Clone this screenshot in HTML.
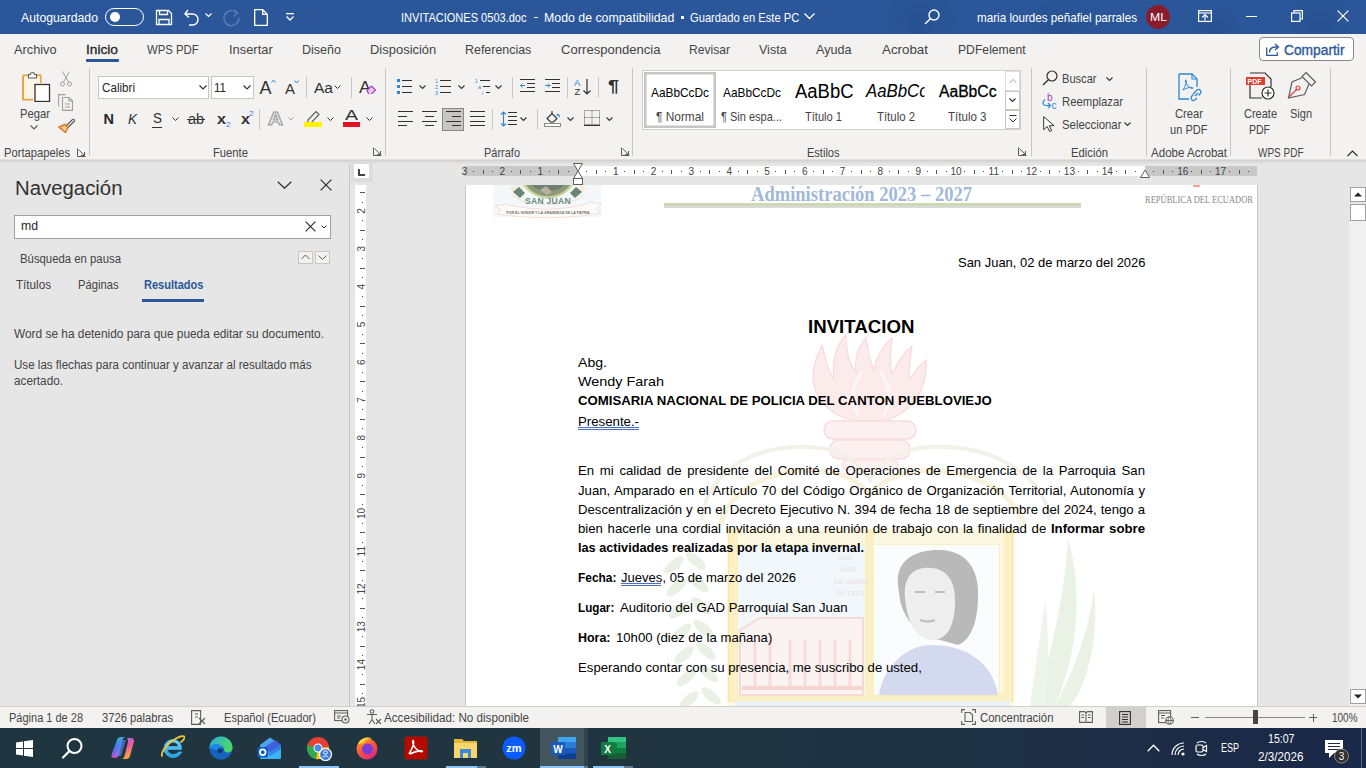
<!DOCTYPE html><html><head><meta charset="utf-8"><style>
html,body{margin:0;padding:0;width:1366px;height:768px;overflow:hidden;position:relative;background:#F3F2F1;font-family:"Liberation Sans",sans-serif;}
div,svg{box-sizing:border-box;}
</style></head><body>
<div style="position:absolute;left:0px;top:0px;width:1366px;height:34px;background:#2B579A"></div>
<svg style="position:absolute;left:0;top:0" width="1366" height="34"><defs><radialGradient id="tb"><stop offset="0" stop-color="#1E4480" stop-opacity="0.35"/><stop offset="0.7" stop-color="#1E4480" stop-opacity="0.15"/><stop offset="1" stop-color="#1E4480" stop-opacity="0"/></radialGradient></defs><circle cx="920" cy="22" r="40" fill="url(#tb)"/><circle cx="1060" cy="30" r="35" fill="url(#tb)"/><circle cx="1215" cy="34" r="30" fill="url(#tb)"/><circle cx="1320" cy="28" r="35" fill="url(#tb)"/></svg>
<div style="position:absolute;left:0px;top:34px;width:1366px;height:126px;background:#F3F2F1"></div>
<div style="position:absolute;left:0px;top:159px;width:1366px;height:1px;background:#E1DFDD"></div>
<div style="position:absolute;left:0px;top:160px;width:349px;height:546px;background:#E6E6E6"></div>
<div style="position:absolute;left:349px;top:160px;width:1px;height:546px;background:#C8C6C4"></div>
<div style="position:absolute;left:350px;top:160px;width:1016px;height:546px;background:#E6E6E6"></div>
<div style="position:absolute;left:0px;top:160px;width:1366px;height:4px;background:linear-gradient(#D2D0CE,#E6E6E6)"></div>
<div style="position:absolute;left:465px;top:185px;width:792px;height:521px;background:#FFFFFF"></div>
<div style="position:absolute;left:465px;top:185px;width:1px;height:521px;background:#C6C6C6"></div>
<div style="position:absolute;left:1257px;top:185px;width:1px;height:521px;background:#C6C6C6"></div>
<div style="position:absolute;left:0px;top:706px;width:1366px;height:1px;background:#D2D0CE"></div>
<div style="position:absolute;left:0px;top:707px;width:1366px;height:21px;background:#F3F2F1"></div>
<div style="position:absolute;left:0px;top:728px;width:1366px;height:40px;background:linear-gradient(90deg,#1F3540 0%,#20353F 45%,#1E3143 70%,#1C2C46 85%,#1A2848 100%)"></div>
<div style="position:absolute;left:21px;top:10.5px;font: 400 13px/13px 'Liberation Sans', sans-serif;color:#FFFFFF;white-space:nowrap;transform:scaleX(0.9426);transform-origin:0 0;">Autoguardado</div>
<div style="position:absolute;left:105px;top:8px;width:39px;height:18px;border:1.5px solid #fff;border-radius:9px"></div>
<div style="position:absolute;left:110px;top:12px;width:10px;height:10px;border-radius:50%;background:#fff"></div>
<svg style="position:absolute;left:155px;top:9px;" width="18" height="17" viewBox="0 0 18 17"><path d="M1.5 1.5h12l3 3v11h-15z" fill="none" stroke="#fff" stroke-width="1.3"/><path d="M4.5 1.5v4h8v-4M4 15.5v-5h10v5" fill="none" stroke="#fff" stroke-width="1.3"/></svg>
<svg style="position:absolute;left:183px;top:8px;" width="20" height="19" viewBox="0 0 20 19"><path d="M5 2L2 6l4 3.5" fill="none" stroke="#fff" stroke-width="1.4"/><path d="M2.5 6h7a5.5 5.5 0 0 1 0 11H6" fill="none" stroke="#fff" stroke-width="1.4"/></svg>
<svg style="position:absolute;left:205px;top:13px;" width="7" height="5" viewBox="0 0 7 5"><path d="M0.5 0.5l3 3 3-3" fill="none" stroke="#fff" stroke-width="1.2"/></svg>
<svg style="position:absolute;left:222px;top:9px;" width="19" height="18" viewBox="0 0 19 18"><path d="M15 4A7.5 7.5 0 1 0 17 9" fill="none" stroke="#5B7FB5" stroke-width="1.4"/><path d="M12 1l3.5 3L12 7" fill="none" stroke="#5B7FB5" stroke-width="1.4"/></svg>
<svg style="position:absolute;left:254px;top:9px;" width="14" height="17" viewBox="0 0 14 17"><path d="M0.7 0.7h8l4.6 4.6v11H0.7z M8.7 0.7v4.6h4.6" fill="none" stroke="#fff" stroke-width="1.3"/></svg>
<svg style="position:absolute;left:286px;top:13px;" width="8" height="8" viewBox="0 0 8 8"><path d="M0 0.7h8" stroke="#fff" stroke-width="1.3"/><path d="M0.5 3.5l3.5 3.5 3.5-3.5" fill="none" stroke="#fff" stroke-width="1.3"/></svg>
<div style="position:absolute;left:401px;top:10.5px;font: 400 13px/13px 'Liberation Sans', sans-serif;color:#FFFFFF;white-space:nowrap;transform:scaleX(0.8487);transform-origin:0 0;">INVITACIONES 0503.doc</div>
<div style="position:absolute;left:534px;top:17px;width:4px;height:1px;background:#fff"></div>
<div style="position:absolute;left:544.3px;top:10.5px;font: 400 13px/13px 'Liberation Sans', sans-serif;color:#FFFFFF;white-space:nowrap;transform:scaleX(0.9489);transform-origin:0 0;">Modo de compatibilidad</div>
<div style="position:absolute;left:681px;top:16px;width:3px;height:3px;background:#fff"></div>
<div style="position:absolute;left:690px;top:10.5px;font: 400 13px/13px 'Liberation Sans', sans-serif;color:#FFFFFF;white-space:nowrap;transform:scaleX(0.8585);transform-origin:0 0;">Guardado en Este PC</div>
<svg style="position:absolute;left:804px;top:13px;" width="11" height="7" viewBox="0 0 11 7"><path d="M0.5 0.5l5 5 5-5" fill="none" stroke="#fff" stroke-width="1.3"/></svg>
<svg style="position:absolute;left:924px;top:9px;" width="16" height="16" viewBox="0 0 16 16"><circle cx="10" cy="6" r="5" fill="none" stroke="#fff" stroke-width="1.4"/><path d="M6.5 9.5L1 15" stroke="#fff" stroke-width="1.5"/></svg>
<div style="position:absolute;left:977px;top:10.5px;font: 400 13px/13px 'Liberation Sans', sans-serif;color:#FFFFFF;white-space:nowrap;transform:scaleX(0.8964);transform-origin:0 0;">maria lourdes peñafiel parrales</div>
<div style="position:absolute;left:1146px;top:5px;width:24px;height:24px;border-radius:50%;background:#8B1C2C"></div>
<div style="position:absolute;left:1149.5px;top:11.5px;font: 400 11px/11px 'Liberation Sans', sans-serif;color:#FFFFFF;white-space:nowrap;transform:scaleX(1.1125);transform-origin:0 0;">ML</div>
<svg style="position:absolute;left:1198px;top:10px;" width="14" height="12" viewBox="0 0 14 12"><rect x="0.6" y="0.6" width="12.8" height="10.8" fill="none" stroke="#fff" stroke-width="1.2"/><path d="M0.6 3h12.8" stroke="#fff" stroke-width="1.2"/><path d="M4 7.5l3-3 3 3M7 4.5v6" fill="none" stroke="#fff" stroke-width="1.2"/></svg>
<div style="position:absolute;left:1246px;top:16px;width:11px;height:1px;background:#fff"></div>
<svg style="position:absolute;left:1291px;top:10px;" width="12" height="12" viewBox="0 0 12 12"><rect x="0.6" y="3" width="8.4" height="8.4" fill="none" stroke="#fff" stroke-width="1.2"/><path d="M3 3V0.6h8.4V9H9" fill="none" stroke="#fff" stroke-width="1.2"/></svg>
<svg style="position:absolute;left:1337px;top:10px;" width="12" height="12" viewBox="0 0 12 12"><path d="M0.6 0.6l10.8 10.8M11.4 0.6L0.6 11.4" stroke="#fff" stroke-width="1.3"/></svg>
<div style="position:absolute;left:14px;top:42.5px;font: 400 13px/13px 'Liberation Sans', sans-serif;color:#444444;white-space:nowrap;transform:scaleX(0.9825);transform-origin:0 0;">Archivo</div>
<div style="position:absolute;left:147px;top:42.5px;font: 400 13px/13px 'Liberation Sans', sans-serif;color:#444444;white-space:nowrap;transform:scaleX(0.8728);transform-origin:0 0;">WPS PDF</div>
<div style="position:absolute;left:229px;top:42.5px;font: 400 13px/13px 'Liberation Sans', sans-serif;color:#444444;white-space:nowrap;transform:scaleX(0.9914);transform-origin:0 0;">Insertar</div>
<div style="position:absolute;left:302px;top:42.5px;font: 400 13px/13px 'Liberation Sans', sans-serif;color:#444444;white-space:nowrap;transform:scaleX(0.9637);transform-origin:0 0;">Diseño</div>
<div style="position:absolute;left:370.4px;top:42.5px;font: 400 13px/13px 'Liberation Sans', sans-serif;color:#444444;white-space:nowrap;transform:scaleX(0.9972);transform-origin:0 0;">Disposición</div>
<div style="position:absolute;left:465.2px;top:42.5px;font: 400 13px/13px 'Liberation Sans', sans-serif;color:#444444;white-space:nowrap;transform:scaleX(0.9557);transform-origin:0 0;">Referencias</div>
<div style="position:absolute;left:561px;top:42.5px;font: 400 13px/13px 'Liberation Sans', sans-serif;color:#444444;white-space:nowrap;transform:scaleX(1.0049);transform-origin:0 0;">Correspondencia</div>
<div style="position:absolute;left:689px;top:42.5px;font: 400 13px/13px 'Liberation Sans', sans-serif;color:#444444;white-space:nowrap;transform:scaleX(0.9302);transform-origin:0 0;">Revisar</div>
<div style="position:absolute;left:758.8px;top:42.5px;font: 400 13px/13px 'Liberation Sans', sans-serif;color:#444444;white-space:nowrap;transform:scaleX(0.9626);transform-origin:0 0;">Vista</div>
<div style="position:absolute;left:816px;top:42.5px;font: 400 13px/13px 'Liberation Sans', sans-serif;color:#444444;white-space:nowrap;transform:scaleX(0.9716);transform-origin:0 0;">Ayuda</div>
<div style="position:absolute;left:882px;top:42.5px;font: 400 13px/13px 'Liberation Sans', sans-serif;color:#444444;white-space:nowrap;transform:scaleX(1.0265);transform-origin:0 0;">Acrobat</div>
<div style="position:absolute;left:958.3px;top:42.5px;font: 400 13px/13px 'Liberation Sans', sans-serif;color:#444444;white-space:nowrap;transform:scaleX(0.9370);transform-origin:0 0;">PDFelement</div>
<div style="position:absolute;left:86px;top:42.5px;font: 400 13px/13px 'Liberation Sans', sans-serif;color:#262626;white-space:nowrap;transform:scaleX(1.0540);transform-origin:0 0;-webkit-text-stroke:0.3px #262626;">Inicio</div>
<div style="position:absolute;left:86px;top:59px;width:33px;height:3px;background:#2B579A;border-radius:1px"></div>
<div style="position:absolute;left:1259px;top:37px;width:95px;height:24px;background:#fff;border:1px solid #8A8886;border-radius:4px"></div>
<svg style="position:absolute;left:1266px;top:43px;" width="14" height="13" viewBox="0 0 14 13"><path d="M0.7 4.5v7.8h10.5v-3" fill="none" stroke="#2B579A" stroke-width="1.3"/><path d="M3.5 9.5c0-3.5 2.5-5.5 6-5.5h1.5" fill="none" stroke="#2B579A" stroke-width="1.3"/><path d="M9 1l3.5 3L9 7" fill="none" stroke="#2B579A" stroke-width="1.3"/></svg>
<div style="position:absolute;left:1283.5px;top:42.5px;font: 400 14px/14px 'Liberation Sans', sans-serif;color:#2B579A;white-space:nowrap;transform:scaleX(0.9842);transform-origin:0 0;-webkit-text-stroke:0.35px #2B579A;">Compartir</div>
<div style="position:absolute;left:89px;top:68px;width:1px;height:88px;background:#C8C6C4"></div>
<div style="position:absolute;left:385px;top:68px;width:1px;height:88px;background:#C8C6C4"></div>
<div style="position:absolute;left:632px;top:68px;width:1px;height:88px;background:#C8C6C4"></div>
<div style="position:absolute;left:1031px;top:68px;width:1px;height:88px;background:#C8C6C4"></div>
<div style="position:absolute;left:1146px;top:68px;width:1px;height:88px;background:#C8C6C4"></div>
<div style="position:absolute;left:1230px;top:68px;width:1px;height:88px;background:#C8C6C4"></div>
<div style="position:absolute;left:1330px;top:68px;width:1px;height:88px;background:#C8C6C4"></div>
<svg style="position:absolute;left:22px;top:71px;" width="29" height="31" viewBox="0 0 29 31"><path d="M1 4.5h5.5M14 4.5h4.5V12" fill="none" stroke="#E8A33D" stroke-width="2"/><path d="M1 4.5v24h10" fill="none" stroke="#E8A33D" stroke-width="2"/><rect x="2" y="5.5" width="16" height="22" fill="#FCF4E6"/><path d="M6.5 7V3.5h2a2 2 0 0 1 4 0h2V7z" fill="#fff" stroke="#605E5C" stroke-width="1.1"/><rect x="13" y="13.5" width="14.5" height="17" fill="#fff" stroke="#323130" stroke-width="1.3"/></svg>
<div style="position:absolute;left:19.5px;top:107.0px;font: 400 13px/13px 'Liberation Sans', sans-serif;color:#444444;white-space:nowrap;transform:scaleX(0.8645);transform-origin:0 0;">Pegar</div>
<svg style="position:absolute;left:30px;top:125px;" width="8" height="5" viewBox="0 0 8 5"><path d="M0.5 0.5l3.5 3.5 3.5-3.5" fill="none" stroke="#605E5C" stroke-width="1.2"/></svg>
<svg style="position:absolute;left:60px;top:71px;" width="12" height="16" viewBox="0 0 12 16"><circle cx="2.5" cy="13" r="2" fill="none" stroke="#A19F9D" stroke-width="1"/><circle cx="9.5" cy="13" r="2" fill="none" stroke="#A19F9D" stroke-width="1"/><path d="M3.5 11L9.5 0.5M8.5 11L2.5 0.5" stroke="#A19F9D" stroke-width="1"/></svg>
<svg style="position:absolute;left:58px;top:94px;" width="16" height="17" viewBox="0 0 16 17"><path d="M0.6 12.5V0.6h7" fill="none" stroke="#A19F9D" stroke-width="1.1"/><path d="M4.5 3.5h6.5l3.5 3.5v9.4h-10z M11 3.5V7h3.5" fill="none" stroke="#A19F9D" stroke-width="1.1"/><path d="M7 10h5M7 13h5" stroke="#A19F9D" stroke-width="1"/></svg>
<svg style="position:absolute;left:58px;top:118px;" width="17" height="15" viewBox="0 0 17 15"><path d="M8 8l6.5-6.5a1.3 1.3 0 0 1 1.8 1.8L10 9.5" fill="none" stroke="#605E5C" stroke-width="1.2"/><path d="M1 9l6-2.5 3 3L7.5 14.5z" fill="#F7C99E" stroke="#E07A1F" stroke-width="1.5"/></svg>
<div style="position:absolute;left:3.5px;top:145.5px;font: 400 13px/13px 'Liberation Sans', sans-serif;color:#444444;white-space:nowrap;transform:scaleX(0.8613);transform-origin:0 0;">Portapapeles</div>
<svg style="position:absolute;left:77px;top:148px;" width="9" height="9" viewBox="0 0 9 9"><path d="M0.5 0.5v8h8" fill="none" stroke="#605E5C" stroke-width="1"/><path d="M1.5 1.5l6 6M4 7.5h3.5V4" fill="none" stroke="#605E5C" stroke-width="1"/></svg>
<div style="position:absolute;left:98px;top:76px;width:111px;height:23px;background:#fff;border:1px solid #C8C6C4"></div>
<div style="position:absolute;left:101.5px;top:81.0px;font: 400 13px/13px 'Liberation Sans', sans-serif;color:#262626;white-space:nowrap;transform:scaleX(0.8957);transform-origin:0 0;">Calibri</div>
<svg style="position:absolute;left:199px;top:85px;" width="8" height="5" viewBox="0 0 8 5"><path d="M0.5 0.5l3.5 3.5 3.5-3.5" fill="none" stroke="#323130" stroke-width="1.2"/></svg>
<div style="position:absolute;left:211px;top:76px;width:43px;height:23px;background:#fff;border:1px solid #C8C6C4"></div>
<div style="position:absolute;left:214px;top:81.0px;font: 400 13px/13px 'Liberation Sans', sans-serif;color:#262626;white-space:nowrap;transform:scaleX(0.8889);transform-origin:0 0;">11</div>
<svg style="position:absolute;left:243px;top:85px;" width="8" height="5" viewBox="0 0 8 5"><path d="M0.5 0.5l3.5 3.5 3.5-3.5" fill="none" stroke="#323130" stroke-width="1.2"/></svg>
<div style="position:absolute;left:259.5px;top:78.5px;font: 400 18px/18px 'Liberation Sans', sans-serif;color:#323130;white-space:nowrap;">A</div>
<svg style="position:absolute;left:271px;top:79px;" width="5" height="4" viewBox="0 0 5 4"><path d="M0.5 3.5l2-2.5 2 2.5" fill="none" stroke="#2B88D8" stroke-width="1"/></svg>
<div style="position:absolute;left:285px;top:82.0px;font: 400 14px/14px 'Liberation Sans', sans-serif;color:#323130;white-space:nowrap;transform:scaleX(1.0702);transform-origin:0 0;">A</div>
<svg style="position:absolute;left:294px;top:80px;" width="5" height="4" viewBox="0 0 5 4"><path d="M0.5 0.5l2 2.5 2-2.5" fill="none" stroke="#2B88D8" stroke-width="1"/></svg>
<div style="position:absolute;left:306px;top:77px;width:1px;height:21px;background:#C8C6C4"></div>
<div style="position:absolute;left:314px;top:80.5px;font: 400 14px/14px 'Liberation Sans', sans-serif;color:#323130;white-space:nowrap;transform:scaleX(1.1095);transform-origin:0 0;">Aa</div>
<svg style="position:absolute;left:334px;top:85px;" width="7" height="5" viewBox="0 0 7 5"><path d="M0.5 0.5l3 3 3-3" fill="none" stroke="#323130" stroke-width="1"/></svg>
<div style="position:absolute;left:351px;top:77px;width:1px;height:21px;background:#C8C6C4"></div>
<div style="position:absolute;left:359px;top:78.5px;font: 400 17px/17px 'Liberation Sans', sans-serif;color:#323130;white-space:nowrap;transform:scaleX(1.0579);transform-origin:0 0;">A</div>
<svg style="position:absolute;left:366px;top:85px;" width="11" height="9" viewBox="0 0 11 9"><path d="M1 5.5l4.5-4.5 4 4-4.5 4.5h-2z" fill="#E9C9F2" stroke="#A33FBF" stroke-width="1.2"/></svg>
<div style="position:absolute;left:103.5px;top:111.8px;font: 700 14.5px/14.5px 'Liberation Sans', sans-serif;color:#262626;white-space:nowrap;">N</div>
<div style="position:absolute;left:128px;top:111.8px;font:italic 400 14.5px/14.5px 'Liberation Sans', sans-serif;color:#323130;white-space:nowrap;transform:scaleX(0.9305);transform-origin:0 0;">K</div>
<div style="position:absolute;left:152.5px;top:110.8px;font: 400 14.5px/14.5px 'Liberation Sans', sans-serif;color:#323130;white-space:nowrap;transform:scaleX(0.9305);transform-origin:0 0;">S</div>
<div style="position:absolute;left:152px;top:127px;width:10px;height:1px;background:#323130"></div>
<svg style="position:absolute;left:172px;top:117px;" width="7" height="5" viewBox="0 0 7 5"><path d="M0.5 0.5l3 3 3-3" fill="none" stroke="#323130" stroke-width="1"/></svg>
<div style="position:absolute;left:188px;top:112.0px;font: 400 14px/14px 'Liberation Sans', sans-serif;color:#323130;white-space:nowrap;transform:scaleX(1.0271);transform-origin:0 0;">ab</div>
<div style="position:absolute;left:187px;top:119px;width:18px;height:1px;background:#323130"></div>
<div style="position:absolute;left:216.5px;top:111.5px;font: 700 14px/14px 'Liberation Sans', sans-serif;color:#323130;white-space:nowrap;transform:scaleX(1.1543);transform-origin:0 0;">x</div>
<div style="position:absolute;left:225.5px;top:120.5px;font: 400 8px/8px 'Liberation Sans', sans-serif;color:#2B88D8;white-space:nowrap;transform:scaleX(1.0105);transform-origin:0 0;">2</div>
<div style="position:absolute;left:240.5px;top:111.5px;font: 700 14px/14px 'Liberation Sans', sans-serif;color:#323130;white-space:nowrap;transform:scaleX(1.1543);transform-origin:0 0;">x</div>
<div style="position:absolute;left:249px;top:109.5px;font: 400 8px/8px 'Liberation Sans', sans-serif;color:#2B88D8;white-space:nowrap;transform:scaleX(1.0105);transform-origin:0 0;">2</div>
<div style="position:absolute;left:259px;top:109px;width:1px;height:21px;background:#C8C6C4"></div>
<div style="position:absolute;left:267.5px;top:109.0px;font: 700 19px/19px 'Liberation Sans', sans-serif;color:#F3F2F1;white-space:nowrap;transform:scaleX(1.0922);transform-origin:0 0;-webkit-text-stroke:1.2px #A19F9D;">A</div>
<svg style="position:absolute;left:288px;top:117px;" width="6" height="4" viewBox="0 0 6 4"><path d="M0.5 0.5l2.5 2.5 2.5-2.5" fill="none" stroke="#A19F9D" stroke-width="1"/></svg>
<svg style="position:absolute;left:304px;top:109px;" width="18" height="19" viewBox="0 0 18 19"><path d="M4 11l8-8.5 3 3-8 8.5H4z" fill="none" stroke="#605E5C" stroke-width="1.2"/><path d="M3 14h4" stroke="#605E5C" stroke-width="1"/></svg>
<div style="position:absolute;left:304px;top:122px;width:18px;height:5px;background:#FFF100"></div>
<svg style="position:absolute;left:327px;top:117px;" width="7" height="5" viewBox="0 0 7 5"><path d="M0.5 0.5l3 3 3-3" fill="none" stroke="#323130" stroke-width="1"/></svg>
<div style="position:absolute;left:345px;top:108.2px;font: 400 14.5px/14.5px 'Liberation Sans', sans-serif;color:#323130;white-space:nowrap;transform:scaleX(1.3441);transform-origin:0 0;">A</div>
<div style="position:absolute;left:343px;top:122px;width:17px;height:5px;background:#E81123"></div>
<svg style="position:absolute;left:366px;top:117px;" width="7" height="5" viewBox="0 0 7 5"><path d="M0.5 0.5l3 3 3-3" fill="none" stroke="#323130" stroke-width="1"/></svg>
<div style="position:absolute;left:212.5px;top:145.5px;font: 400 13px/13px 'Liberation Sans', sans-serif;color:#444444;white-space:nowrap;transform:scaleX(0.8645);transform-origin:0 0;">Fuente</div>
<svg style="position:absolute;left:373px;top:147px;" width="9" height="9" viewBox="0 0 9 9"><path d="M0.5 0.5v8h8" fill="none" stroke="#605E5C" stroke-width="1"/><path d="M1.5 1.5l6 6M4 7.5h3.5V4" fill="none" stroke="#605E5C" stroke-width="1"/></svg>
<svg style="position:absolute;left:397px;top:79px;" width="15" height="15" viewBox="0 0 15 15"><rect x="0" y="0" width="3" height="3" fill="#2B88D8"/><rect x="0" y="6" width="3" height="3" fill="#2B88D8"/><rect x="0" y="12" width="3" height="3" fill="#2B88D8"/><path d="M5 1.5h10M5 7.5h10M5 13.5h10" stroke="#323130" stroke-width="1"/></svg>
<svg style="position:absolute;left:419px;top:85px;" width="7" height="5" viewBox="0 0 7 5"><path d="M0.5 0.5l3 3 3-3" fill="none" stroke="#323130" stroke-width="1.1"/></svg>
<svg style="position:absolute;left:435px;top:78px;" width="16" height="17" viewBox="0 0 16 17"><text x="0" y="5" font-size="5.5" fill="#2B88D8" font-family="Liberation Sans">1</text><text x="0" y="11" font-size="5.5" fill="#2B88D8" font-family="Liberation Sans">2</text><text x="0" y="17" font-size="5.5" fill="#2B88D8" font-family="Liberation Sans">3</text><path d="M5 2.5h11M5 8.5h11M5 14.5h11" stroke="#323130" stroke-width="1"/></svg>
<svg style="position:absolute;left:458px;top:85px;" width="7" height="5" viewBox="0 0 7 5"><path d="M0.5 0.5l3 3 3-3" fill="none" stroke="#323130" stroke-width="1.1"/></svg>
<svg style="position:absolute;left:475px;top:78px;" width="16" height="17" viewBox="0 0 16 17"><text x="0" y="5" font-size="5" fill="#2B88D8" font-family="Liberation Sans">1</text><text x="3" y="11" font-size="5.5" fill="#2B88D8" font-family="Liberation Sans">a</text><text x="7" y="17" font-size="5" fill="#2B88D8" font-family="Liberation Sans">i</text><path d="M5 2.5h10M8 8.5h7M11 14.5h4" stroke="#323130" stroke-width="1"/></svg>
<svg style="position:absolute;left:495px;top:85px;" width="7" height="5" viewBox="0 0 7 5"><path d="M0.5 0.5l3 3 3-3" fill="none" stroke="#323130" stroke-width="1.1"/></svg>
<div style="position:absolute;left:512px;top:77px;width:1px;height:21px;background:#C8C6C4"></div>
<svg style="position:absolute;left:520px;top:79px;" width="16" height="14" viewBox="0 0 16 14"><path d="M0 0.5h15M7 4.5h8M7 8.5h8M0 12.5h15" stroke="#323130" stroke-width="1"/><path d="M5 6.5H0.5M2.5 4.5l-2 2 2 2" fill="none" stroke="#2B88D8" stroke-width="1"/></svg>
<svg style="position:absolute;left:545px;top:79px;" width="15" height="14" viewBox="0 0 15 14"><path d="M0 0.5h15M7 4.5h8M7 8.5h8M0 12.5h15" stroke="#323130" stroke-width="1"/><path d="M0 6.5h5M3 4.5l2 2-2 2" fill="none" stroke="#2B88D8" stroke-width="1"/></svg>
<div style="position:absolute;left:567px;top:77px;width:1px;height:21px;background:#C8C6C4"></div>
<svg style="position:absolute;left:574px;top:78px;" width="18" height="18" viewBox="0 0 18 18"><text x="0" y="8" font-size="9.5" fill="#2B88D8" font-family="Liberation Sans">A</text><text x="0.5" y="17" font-size="9.5" fill="#323130" font-family="Liberation Sans">Z</text><path d="M13 1v15M9.5 12.5l3.5 3.5 3.5-3.5" fill="none" stroke="#323130" stroke-width="1.2"/></svg>
<div style="position:absolute;left:598px;top:77px;width:1px;height:21px;background:#C8C6C4"></div>
<div style="position:absolute;left:608px;top:79.0px;font: 700 16px/16px 'Liberation Sans', sans-serif;color:#323130;white-space:nowrap;transform:scaleX(1.2351);transform-origin:0 0;">¶</div>
<svg style="position:absolute;left:398px;top:111px;" width="15" height="15" viewBox="0 0 15 15"><path d="M0 0.5h15M0 5.5h9M0 10.5h15M0 14.5h9" stroke="#323130" stroke-width="1"/></svg>
<svg style="position:absolute;left:422px;top:111px;" width="15" height="15" viewBox="0 0 15 15"><path d="M0 0.5h15M3 5.5h9M0 10.5h15M3 14.5h9" stroke="#323130" stroke-width="1"/></svg>
<div style="position:absolute;left:442px;top:108px;width:22px;height:23px;background:#C8C6C4;border:1px solid #8A8886"></div>
<svg style="position:absolute;left:446px;top:111px;" width="15" height="15" viewBox="0 0 15 15"><path d="M0 0.5h15M6 5.5h9M0 10.5h15M6 14.5h9" stroke="#323130" stroke-width="1"/></svg>
<svg style="position:absolute;left:470px;top:111px;" width="15" height="15" viewBox="0 0 15 15"><path d="M0 0.5h15M0 5.5h15M0 10.5h15M0 14.5h15" stroke="#323130" stroke-width="1"/></svg>
<div style="position:absolute;left:492px;top:109px;width:1px;height:21px;background:#C8C6C4"></div>
<svg style="position:absolute;left:500px;top:111px;" width="17" height="16" viewBox="0 0 17 16"><path d="M3.5 1v14M1 3.5l2.5-2.5 2.5 2.5M1 12.5l2.5 2.5 2.5-2.5" fill="none" stroke="#2B88D8" stroke-width="1.1"/><path d="M8 1.5h9M8 5.5h9M8 9.5h9M8 13.5h9" stroke="#323130" stroke-width="1"/></svg>
<svg style="position:absolute;left:520px;top:117px;" width="7" height="5" viewBox="0 0 7 5"><path d="M0.5 0.5l3 3 3-3" fill="none" stroke="#323130" stroke-width="1.1"/></svg>
<div style="position:absolute;left:537px;top:109px;width:1px;height:21px;background:#C8C6C4"></div>
<svg style="position:absolute;left:544px;top:110px;" width="18" height="17" viewBox="0 0 18 17"><path d="M3 8.5L8 3.5l5 5-3.5 3.5h-3z" fill="none" stroke="#323130" stroke-width="1.1"/><path d="M8 3.5V1" stroke="#323130" stroke-width="1.1"/><path d="M12 5c2-1 3.5 0 3.5 2" fill="none" stroke="#2B88D8" stroke-width="1.3"/><rect x="0.5" y="13.5" width="16" height="3" fill="#fff" stroke="#8A8886" stroke-width="1"/></svg>
<svg style="position:absolute;left:567px;top:117px;" width="7" height="5" viewBox="0 0 7 5"><path d="M0.5 0.5l3 3 3-3" fill="none" stroke="#323130" stroke-width="1.1"/></svg>
<svg style="position:absolute;left:584px;top:110px;" width="16" height="16" viewBox="0 0 16 16"><path d="M0.5 0.5h15v14h-15z M8 0.5v14 M0.5 7.5h15" fill="none" stroke="#605E5C" stroke-width="1" stroke-dasharray="1 1"/><path d="M0 15.5h16" stroke="#323130" stroke-width="1.2"/></svg>
<svg style="position:absolute;left:606px;top:117px;" width="7" height="5" viewBox="0 0 7 5"><path d="M0.5 0.5l3 3 3-3" fill="none" stroke="#323130" stroke-width="1.1"/></svg>
<div style="position:absolute;left:483.5px;top:145.5px;font: 400 13px/13px 'Liberation Sans', sans-serif;color:#444444;white-space:nowrap;transform:scaleX(0.8443);transform-origin:0 0;">Párrafo</div>
<svg style="position:absolute;left:621px;top:147px;" width="9" height="9" viewBox="0 0 9 9"><path d="M0.5 0.5v8h8" fill="none" stroke="#605E5C" stroke-width="1"/><path d="M1.5 1.5l6 6M4 7.5h3.5V4" fill="none" stroke="#605E5C" stroke-width="1"/></svg>
<div style="position:absolute;left:642px;top:70px;width:379px;height:60px;background:#fff;border:1px solid #D2D0CE"></div>
<div style="position:absolute;left:644px;top:72px;width:72px;height:56px;background:#fff;border:2px solid #C8C6C4"></div>
<div style="position:absolute;left:646px;top:74px;width:68px;height:52px;border:1px solid #E1DFDD"></div>
<div style="position:absolute;left:651px;top:85.8px;font: 400 13.5px/13.5px 'Liberation Sans', sans-serif;color:#000;white-space:nowrap;transform:scaleX(0.8784);transform-origin:0 0;">AaBbCcDc</div>
<div style="position:absolute;left:655.5px;top:110.0px;font: 400 13px/13px 'Liberation Sans', sans-serif;color:#444444;white-space:nowrap;transform:scaleX(0.9143);transform-origin:0 0;">¶ Normal</div>
<div style="position:absolute;left:722.5px;top:85.8px;font: 400 13.5px/13.5px 'Liberation Sans', sans-serif;color:#000;white-space:nowrap;transform:scaleX(0.8784);transform-origin:0 0;">AaBbCcDc</div>
<div style="position:absolute;left:720.5px;top:110.0px;font: 400 13px/13px 'Liberation Sans', sans-serif;color:#444444;white-space:nowrap;transform:scaleX(0.8469);transform-origin:0 0;">¶ Sin espa...</div>
<div style="position:absolute;left:794.5px;top:82.2px;font: 400 19.5px/19.5px 'Liberation Sans', sans-serif;color:#000;white-space:nowrap;transform:scaleX(0.9466);transform-origin:0 0;">AaBbC</div>
<div style="position:absolute;left:804.5px;top:110.0px;font: 400 13px/13px 'Liberation Sans', sans-serif;color:#444444;white-space:nowrap;transform:scaleX(0.8533);transform-origin:0 0;">Título 1</div>
<div style="position:absolute;left:866px;top:83.2px;font:italic 400 17.5px/17.5px 'Liberation Sans', sans-serif;color:#000;white-space:nowrap;transform:scaleX(0.9601);transform-origin:0 0;">AaBbC<span style="display:inline-block;width:6px;overflow:hidden;vertical-align:top">c</span></div>
<div style="position:absolute;left:876.5px;top:110.0px;font: 400 13px/13px 'Liberation Sans', sans-serif;color:#444444;white-space:nowrap;transform:scaleX(0.8764);transform-origin:0 0;">Título 2</div>
<div style="position:absolute;left:938.5px;top:83.5px;font: 400 16px/16px 'Liberation Sans', sans-serif;color:#000;white-space:nowrap;transform:scaleX(0.9795);transform-origin:0 0;-webkit-text-stroke:0.3px #000;">AaBbCc</div>
<div style="position:absolute;left:948px;top:110.0px;font: 400 13px/13px 'Liberation Sans', sans-serif;color:#444444;white-space:nowrap;transform:scaleX(0.8879);transform-origin:0 0;">Título 3</div>
<div style="position:absolute;left:1005px;top:71px;width:15px;height:20px;background:#fff;border:1px solid #E1DFDD"></div>
<svg style="position:absolute;left:1009px;top:79px;" width="8" height="5" viewBox="0 0 8 5"><path d="M0.5 4l3.5-3.5 3.5 3.5" fill="none" stroke="#C8C6C4" stroke-width="1.1"/></svg>
<div style="position:absolute;left:1005px;top:91px;width:15px;height:19px;background:#fff;border:1px solid #C8C6C4"></div>
<svg style="position:absolute;left:1009px;top:98px;" width="7" height="5" viewBox="0 0 7 5"><path d="M0.5 0.5l3 3 3-3" fill="none" stroke="#323130" stroke-width="1.1"/></svg>
<div style="position:absolute;left:1005px;top:110px;width:15px;height:19px;background:#fff;border:1px solid #C8C6C4"></div>
<svg style="position:absolute;left:1009px;top:115px;" width="8" height="9" viewBox="0 0 8 9"><path d="M0.5 0.5h7" stroke="#323130" stroke-width="1"/><path d="M0.5 3.5l3.5 3.5 3.5-3.5" fill="none" stroke="#323130" stroke-width="1"/></svg>
<div style="position:absolute;left:807px;top:145.5px;font: 400 13px/13px 'Liberation Sans', sans-serif;color:#444444;white-space:nowrap;transform:scaleX(0.8486);transform-origin:0 0;">Estilos</div>
<svg style="position:absolute;left:1018px;top:147px;" width="9" height="9" viewBox="0 0 9 9"><path d="M0.5 0.5v8h8" fill="none" stroke="#605E5C" stroke-width="1"/><path d="M1.5 1.5l6 6M4 7.5h3.5V4" fill="none" stroke="#605E5C" stroke-width="1"/></svg>
<svg style="position:absolute;left:1042px;top:70px;" width="16" height="16" viewBox="0 0 16 16"><circle cx="10" cy="6" r="5" fill="none" stroke="#323130" stroke-width="1.2"/><path d="M6.3 9.7L1 15" stroke="#323130" stroke-width="1.4"/></svg>
<div style="position:absolute;left:1061.5px;top:71.7px;font: 400 13px/13px 'Liberation Sans', sans-serif;color:#444444;white-space:nowrap;transform:scaleX(0.8525);transform-origin:0 0;">Buscar</div>
<svg style="position:absolute;left:1106px;top:77px;" width="7" height="5" viewBox="0 0 7 5"><path d="M0.5 0.5l3 3 3-3" fill="none" stroke="#323130" stroke-width="1.1"/></svg>
<svg style="position:absolute;left:1041px;top:92px;" width="17" height="18" viewBox="0 0 17 18"><text x="6" y="8.5" font-size="10" fill="#A33FBF" font-family="Liberation Sans">b</text><text x="10.5" y="17" font-size="10" fill="#2B88D8" font-family="Liberation Sans">c</text><path d="M4 7.5C1 9.5 1.5 13.5 5 13.5h4M7 11l2.5 2.5L7 16" fill="none" stroke="#2B88D8" stroke-width="1.2"/></svg>
<div style="position:absolute;left:1061.5px;top:94.7px;font: 400 13px/13px 'Liberation Sans', sans-serif;color:#444444;white-space:nowrap;transform:scaleX(0.8703);transform-origin:0 0;">Reemplazar</div>
<svg style="position:absolute;left:1043px;top:116px;" width="12" height="16" viewBox="0 0 12 16"><path d="M0.7 0.7v13l3.5-3.2 2.5 5 2-1-2.4-4.8h4.8z" fill="#fff" stroke="#323130" stroke-width="1"/></svg>
<div style="position:absolute;left:1061.5px;top:117.7px;font: 400 13px/13px 'Liberation Sans', sans-serif;color:#444444;white-space:nowrap;transform:scaleX(0.8758);transform-origin:0 0;">Seleccionar</div>
<svg style="position:absolute;left:1124px;top:122px;" width="7" height="5" viewBox="0 0 7 5"><path d="M0.5 0.5l3 3 3-3" fill="none" stroke="#323130" stroke-width="1.1"/></svg>
<div style="position:absolute;left:1070.5px;top:145.5px;font: 400 13px/13px 'Liberation Sans', sans-serif;color:#444444;white-space:nowrap;transform:scaleX(0.8677);transform-origin:0 0;">Edición</div>
<svg style="position:absolute;left:1178px;top:73px;" width="27" height="30" viewBox="0 0 27 30"><path d="M1 1h13l5 5v8" fill="none" stroke="#2B88D8" stroke-width="1.3"/><path d="M1 1v25h10" fill="none" stroke="#2B88D8" stroke-width="1.3"/><path d="M14 1v5h5" fill="none" stroke="#2B88D8" stroke-width="1.1"/><path d="M5 17c3-5 4-9 3-10s-1 3 2 6 5 3 5 2-5-1-10 2" fill="none" stroke="#2B88D8" stroke-width="1"/><path d="M15 21l4-4a2.5 2.5 0 0 1 3.5 3.5l-2 2M19 25l-2 2a2.5 2.5 0 0 1-3.5-3.5l2-2M17 23l3-3" fill="none" stroke="#2B88D8" stroke-width="1.3"/></svg>
<div style="position:absolute;left:1174.5px;top:106.5px;font: 400 13px/13px 'Liberation Sans', sans-serif;color:#444444;white-space:nowrap;transform:scaleX(0.8611);transform-origin:0 0;">Crear</div>
<div style="position:absolute;left:1169.5px;top:122.5px;font: 400 13px/13px 'Liberation Sans', sans-serif;color:#444444;white-space:nowrap;transform:scaleX(0.8508);transform-origin:0 0;">un PDF</div>
<div style="position:absolute;left:1150.5px;top:145.5px;font: 400 13px/13px 'Liberation Sans', sans-serif;color:#444444;white-space:nowrap;transform:scaleX(0.8910);transform-origin:0 0;">Adobe Acrobat</div>
<svg style="position:absolute;left:1246px;top:72px;" width="30" height="28" viewBox="0 0 30 28"><path d="M4 1h15l6 6v8" fill="none" stroke="#323130" stroke-width="1.2"/><path d="M4 10v16h12" fill="none" stroke="#323130" stroke-width="1.2"/><rect x="0" y="5" width="19" height="8" fill="#E03C31"/><text x="1.5" y="12" font-size="7" font-weight="700" fill="#fff" font-family="Liberation Sans">PDF</text><circle cx="22" cy="21" r="6" fill="#fff" stroke="#323130" stroke-width="1.2"/><path d="M22 17.5v7M18.5 21h7" stroke="#323130" stroke-width="1.2"/></svg>
<div style="position:absolute;left:1243.5px;top:106.5px;font: 400 13px/13px 'Liberation Sans', sans-serif;color:#444444;white-space:nowrap;transform:scaleX(0.8455);transform-origin:0 0;">Create</div>
<div style="position:absolute;left:1249px;top:122.5px;font: 400 13px/13px 'Liberation Sans', sans-serif;color:#444444;white-space:nowrap;transform:scaleX(0.8077);transform-origin:0 0;">PDF</div>
<svg style="position:absolute;left:1287px;top:71px;" width="30" height="29" viewBox="0 0 30 29"><path d="M19 1.5l9.5 9.5-4 4-9.5-9.5z" fill="none" stroke="#605E5C" stroke-width="1.2"/><path d="M15.5 6.5L5 11 1.5 27 17.5 23.5 22 13" fill="none" stroke="#605E5C" stroke-width="1.2"/><circle cx="11" cy="17" r="2" fill="none" stroke="#E03C31" stroke-width="1.1"/><path d="M9.5 18.5L2 26" stroke="#E03C31" stroke-width="1.1"/></svg>
<div style="position:absolute;left:1290px;top:106.5px;font: 400 13px/13px 'Liberation Sans', sans-serif;color:#444444;white-space:nowrap;transform:scaleX(0.8451);transform-origin:0 0;">Sign</div>
<div style="position:absolute;left:1258px;top:145.5px;font: 400 13px/13px 'Liberation Sans', sans-serif;color:#444444;white-space:nowrap;transform:scaleX(0.7681);transform-origin:0 0;">WPS PDF</div>
<svg style="position:absolute;left:1347px;top:150px;" width="11" height="7" viewBox="0 0 11 7"><path d="M0.5 6l5-5 5 5" fill="none" stroke="#323130" stroke-width="1.2"/></svg>
<div style="position:absolute;left:14.5px;top:177.5px;font: 400 20px/20px 'Liberation Sans', sans-serif;color:#323130;white-space:nowrap;transform:scaleX(1.0178);transform-origin:0 0;">Navegación</div>
<svg style="position:absolute;left:277px;top:181px;" width="15" height="8" viewBox="0 0 15 8"><path d="M0.7 0.7l6.8 6.5 6.8-6.5" fill="none" stroke="#323130" stroke-width="1.3"/></svg>
<svg style="position:absolute;left:320px;top:179px;" width="12" height="12" viewBox="0 0 12 12"><path d="M0.6 0.6l10.8 10.8M11.4 0.6L0.6 11.4" stroke="#323130" stroke-width="1.3"/></svg>
<div style="position:absolute;left:14px;top:215px;width:317px;height:24px;background:#fff;border:1px solid #A19F9D"></div>
<div style="position:absolute;left:21px;top:219.0px;font: 400 13px/13px 'Liberation Sans', sans-serif;color:#262626;white-space:nowrap;transform:scaleX(0.9412);transform-origin:0 0;">md</div>
<svg style="position:absolute;left:305px;top:221px;" width="11" height="11" viewBox="0 0 11 11"><path d="M0.6 0.6l9.8 9.8M10.4 0.6L0.6 10.4" stroke="#323130" stroke-width="1.2"/></svg>
<svg style="position:absolute;left:321px;top:225px;" width="6" height="4" viewBox="0 0 6 4"><path d="M0.5 0.5l2.5 2.5 2.5-2.5" fill="none" stroke="#323130" stroke-width="1"/></svg>
<div style="position:absolute;left:19.5px;top:252.8px;font: 400 12.5px/12.5px 'Liberation Sans', sans-serif;color:#444;white-space:nowrap;transform:scaleX(0.9081);transform-origin:0 0;">Búsqueda en pausa</div>
<div style="position:absolute;left:298px;top:251px;width:15px;height:13px;background:#F3F2F1;border:1px solid #C8C6C4"></div>
<svg style="position:absolute;left:301px;top:254px;" width="9" height="6" viewBox="0 0 9 6"><path d="M0.5 5l4-4 4 4" fill="none" stroke="#605E5C" stroke-width="1"/></svg>
<div style="position:absolute;left:315px;top:251px;width:15px;height:13px;background:#F3F2F1;border:1px solid #C8C6C4"></div>
<svg style="position:absolute;left:318px;top:255px;" width="9" height="6" viewBox="0 0 9 6"><path d="M0.5 0.5l4 4 4-4" fill="none" stroke="#605E5C" stroke-width="1"/></svg>
<div style="position:absolute;left:16px;top:277.5px;font: 400 13px/13px 'Liberation Sans', sans-serif;color:#444;white-space:nowrap;transform:scaleX(0.8971);transform-origin:0 0;">Títulos</div>
<div style="position:absolute;left:77.5px;top:277.5px;font: 400 13px/13px 'Liberation Sans', sans-serif;color:#444;white-space:nowrap;transform:scaleX(0.8620);transform-origin:0 0;">Páginas</div>
<div style="position:absolute;left:143.5px;top:277.5px;font: 700 13px/13px 'Liberation Sans', sans-serif;color:#2B579A;white-space:nowrap;transform:scaleX(0.8491);transform-origin:0 0;">Resultados</div>
<div style="position:absolute;left:142px;top:299px;width:62px;height:3px;background:#2B579A"></div>
<div style="position:absolute;left:14px;top:327.8px;font: 400 12.5px/12.5px 'Liberation Sans', sans-serif;color:#444;white-space:nowrap;transform:scaleX(0.9498);transform-origin:0 0;">Word se ha detenido para que pueda editar su documento.</div>
<div style="position:absolute;left:14px;top:359.2px;font: 400 12.5px/12.5px 'Liberation Sans', sans-serif;color:#444;white-space:nowrap;transform:scaleX(0.9268);transform-origin:0 0;">Use las flechas para continuar y avanzar al resultado más</div>
<div style="position:absolute;left:14px;top:375.2px;font: 400 12.5px/12.5px 'Liberation Sans', sans-serif;color:#444;white-space:nowrap;transform:scaleX(0.9400);transform-origin:0 0;">acertado.</div>
<div style="position:absolute;left:351px;top:161px;width:22px;height:21px;background:#DCDCDC"></div>
<div style="position:absolute;left:354px;top:164px;width:15px;height:14px;background:#fff"></div>
<svg style="position:absolute;left:358px;top:169px;" width="7" height="7" viewBox="0 0 7 7"><path d="M1 0v6h6" fill="none" stroke="#444" stroke-width="2"/></svg>
<div style="position:absolute;left:464px;top:166px;width:793px;height:10px;background:#C8C8C8"></div>
<div style="position:absolute;left:578px;top:166px;width:567px;height:10px;background:#fff"></div>
<svg style="position:absolute;left:0;top:0" width="1366" height="190" viewBox="0 0 1366 190"><text x="464.6" y="174.5" font-size="10" text-anchor="middle" fill="#444" font-family="Liberation Sans">3</text><rect x="473" y="171" width="1" height="1" fill="#444"/><rect x="483" y="170" width="1" height="4" fill="#555"/><rect x="492" y="171" width="1" height="1" fill="#444"/><text x="502.4" y="174.5" font-size="10" text-anchor="middle" fill="#444" font-family="Liberation Sans">2</text><rect x="511" y="171" width="1" height="1" fill="#444"/><rect x="520" y="170" width="1" height="4" fill="#555"/><rect x="530" y="171" width="1" height="1" fill="#444"/><text x="540.2" y="174.5" font-size="10" text-anchor="middle" fill="#444" font-family="Liberation Sans">1</text><rect x="549" y="171" width="1" height="1" fill="#444"/><rect x="558" y="170" width="1" height="4" fill="#555"/><rect x="568" y="171" width="1" height="1" fill="#444"/><rect x="586" y="171" width="1" height="1" fill="#444"/><rect x="596" y="170" width="1" height="4" fill="#555"/><rect x="605" y="171" width="1" height="1" fill="#444"/><text x="615.8" y="174.5" font-size="10" text-anchor="middle" fill="#444" font-family="Liberation Sans">1</text><rect x="624" y="171" width="1" height="1" fill="#444"/><rect x="634" y="170" width="1" height="4" fill="#555"/><rect x="643" y="171" width="1" height="1" fill="#444"/><text x="653.6" y="174.5" font-size="10" text-anchor="middle" fill="#444" font-family="Liberation Sans">2</text><rect x="662" y="171" width="1" height="1" fill="#444"/><rect x="671" y="170" width="1" height="4" fill="#555"/><rect x="681" y="171" width="1" height="1" fill="#444"/><text x="691.4" y="174.5" font-size="10" text-anchor="middle" fill="#444" font-family="Liberation Sans">3</text><rect x="700" y="171" width="1" height="1" fill="#444"/><rect x="709" y="170" width="1" height="4" fill="#555"/><rect x="719" y="171" width="1" height="1" fill="#444"/><text x="729.2" y="174.5" font-size="10" text-anchor="middle" fill="#444" font-family="Liberation Sans">4</text><rect x="738" y="171" width="1" height="1" fill="#444"/><rect x="747" y="170" width="1" height="4" fill="#555"/><rect x="757" y="171" width="1" height="1" fill="#444"/><text x="767.0" y="174.5" font-size="10" text-anchor="middle" fill="#444" font-family="Liberation Sans">5</text><rect x="775" y="171" width="1" height="1" fill="#444"/><rect x="785" y="170" width="1" height="4" fill="#555"/><rect x="794" y="171" width="1" height="1" fill="#444"/><text x="804.8" y="174.5" font-size="10" text-anchor="middle" fill="#444" font-family="Liberation Sans">6</text><rect x="813" y="171" width="1" height="1" fill="#444"/><rect x="823" y="170" width="1" height="4" fill="#555"/><rect x="832" y="171" width="1" height="1" fill="#444"/><text x="842.6" y="174.5" font-size="10" text-anchor="middle" fill="#444" font-family="Liberation Sans">7</text><rect x="851" y="171" width="1" height="1" fill="#444"/><rect x="861" y="170" width="1" height="4" fill="#555"/><rect x="870" y="171" width="1" height="1" fill="#444"/><text x="880.4" y="174.5" font-size="10" text-anchor="middle" fill="#444" font-family="Liberation Sans">8</text><rect x="889" y="171" width="1" height="1" fill="#444"/><rect x="898" y="170" width="1" height="4" fill="#555"/><rect x="908" y="171" width="1" height="1" fill="#444"/><text x="918.2" y="174.5" font-size="10" text-anchor="middle" fill="#444" font-family="Liberation Sans">9</text><rect x="927" y="171" width="1" height="1" fill="#444"/><rect x="936" y="170" width="1" height="4" fill="#555"/><rect x="946" y="171" width="1" height="1" fill="#444"/><text x="956.0" y="174.5" font-size="10" text-anchor="middle" fill="#444" font-family="Liberation Sans">10</text><rect x="964" y="171" width="1" height="1" fill="#444"/><rect x="974" y="170" width="1" height="4" fill="#555"/><rect x="983" y="171" width="1" height="1" fill="#444"/><text x="993.8" y="174.5" font-size="10" text-anchor="middle" fill="#444" font-family="Liberation Sans">11</text><rect x="1002" y="171" width="1" height="1" fill="#444"/><rect x="1012" y="170" width="1" height="4" fill="#555"/><rect x="1021" y="171" width="1" height="1" fill="#444"/><text x="1031.6" y="174.5" font-size="10" text-anchor="middle" fill="#444" font-family="Liberation Sans">12</text><rect x="1040" y="171" width="1" height="1" fill="#444"/><rect x="1049" y="170" width="1" height="4" fill="#555"/><rect x="1059" y="171" width="1" height="1" fill="#444"/><text x="1069.4" y="174.5" font-size="10" text-anchor="middle" fill="#444" font-family="Liberation Sans">13</text><rect x="1078" y="171" width="1" height="1" fill="#444"/><rect x="1087" y="170" width="1" height="4" fill="#555"/><rect x="1097" y="171" width="1" height="1" fill="#444"/><text x="1107.2" y="174.5" font-size="10" text-anchor="middle" fill="#444" font-family="Liberation Sans">14</text><rect x="1116" y="171" width="1" height="1" fill="#444"/><rect x="1125" y="170" width="1" height="4" fill="#555"/><rect x="1135" y="171" width="1" height="1" fill="#444"/><rect x="1153" y="171" width="1" height="1" fill="#444"/><rect x="1163" y="170" width="1" height="4" fill="#555"/><rect x="1172" y="171" width="1" height="1" fill="#444"/><text x="1182.8" y="174.5" font-size="10" text-anchor="middle" fill="#444" font-family="Liberation Sans">16</text><rect x="1191" y="171" width="1" height="1" fill="#444"/><rect x="1201" y="170" width="1" height="4" fill="#555"/><rect x="1210" y="171" width="1" height="1" fill="#444"/><text x="1220.6" y="174.5" font-size="10" text-anchor="middle" fill="#444" font-family="Liberation Sans">17</text><rect x="1229" y="171" width="1" height="1" fill="#444"/><rect x="1239" y="170" width="1" height="4" fill="#555"/><rect x="1248" y="171" width="1" height="1" fill="#444"/><path d="M573.5 163.5h9l-4.5 7.5z" fill="#fff" stroke="#605E5C" stroke-width="1"/><path d="M573.5 178.5h9l-4.5-7.5z" fill="#fff" stroke="#605E5C" stroke-width="1"/><rect x="573.5" y="178.5" width="9" height="6" fill="#fff" stroke="#605E5C" stroke-width="1"/><path d="M1140.5 177.5h9l-4.5-7.5z" fill="#fff" stroke="#605E5C" stroke-width="1"/></svg>
<div style="position:absolute;left:355px;top:185px;width:11px;height:521px;background:#fff"></div>
<svg style="position:absolute;left:0;top:0" width="400" height="706" viewBox="0 0 400 706"><rect x="360" y="192" width="5" height="1" fill="#555"/><rect x="362" y="202" width="1" height="1" fill="#444"/><text x="0" y="0" transform="translate(364.5 211.0) rotate(-90)" font-size="10" text-anchor="middle" fill="#444" font-family="Liberation Sans">2</text><rect x="362" y="220" width="1" height="1" fill="#444"/><rect x="360" y="230" width="5" height="1" fill="#555"/><rect x="362" y="239" width="1" height="1" fill="#444"/><text x="0" y="0" transform="translate(364.5 248.8) rotate(-90)" font-size="10" text-anchor="middle" fill="#444" font-family="Liberation Sans">3</text><rect x="362" y="258" width="1" height="1" fill="#444"/><rect x="360" y="268" width="5" height="1" fill="#555"/><rect x="362" y="277" width="1" height="1" fill="#444"/><text x="0" y="0" transform="translate(364.5 286.6) rotate(-90)" font-size="10" text-anchor="middle" fill="#444" font-family="Liberation Sans">4</text><rect x="362" y="296" width="1" height="1" fill="#444"/><rect x="360" y="306" width="5" height="1" fill="#555"/><rect x="362" y="315" width="1" height="1" fill="#444"/><text x="0" y="0" transform="translate(364.5 324.4) rotate(-90)" font-size="10" text-anchor="middle" fill="#444" font-family="Liberation Sans">5</text><rect x="362" y="334" width="1" height="1" fill="#444"/><rect x="360" y="343" width="5" height="1" fill="#555"/><rect x="362" y="353" width="1" height="1" fill="#444"/><text x="0" y="0" transform="translate(364.5 362.2) rotate(-90)" font-size="10" text-anchor="middle" fill="#444" font-family="Liberation Sans">6</text><rect x="362" y="372" width="1" height="1" fill="#444"/><rect x="360" y="381" width="5" height="1" fill="#555"/><rect x="362" y="391" width="1" height="1" fill="#444"/><text x="0" y="0" transform="translate(364.5 400.0) rotate(-90)" font-size="10" text-anchor="middle" fill="#444" font-family="Liberation Sans">7</text><rect x="362" y="409" width="1" height="1" fill="#444"/><rect x="360" y="419" width="5" height="1" fill="#555"/><rect x="362" y="428" width="1" height="1" fill="#444"/><text x="0" y="0" transform="translate(364.5 437.8) rotate(-90)" font-size="10" text-anchor="middle" fill="#444" font-family="Liberation Sans">8</text><rect x="362" y="447" width="1" height="1" fill="#444"/><rect x="360" y="457" width="5" height="1" fill="#555"/><rect x="362" y="466" width="1" height="1" fill="#444"/><text x="0" y="0" transform="translate(364.5 475.6) rotate(-90)" font-size="10" text-anchor="middle" fill="#444" font-family="Liberation Sans">9</text><rect x="362" y="485" width="1" height="1" fill="#444"/><rect x="360" y="494" width="5" height="1" fill="#555"/><rect x="362" y="504" width="1" height="1" fill="#444"/><text x="0" y="0" transform="translate(364.5 513.4) rotate(-90)" font-size="10" text-anchor="middle" fill="#444" font-family="Liberation Sans">10</text><rect x="362" y="523" width="1" height="1" fill="#444"/><rect x="360" y="532" width="5" height="1" fill="#555"/><rect x="362" y="542" width="1" height="1" fill="#444"/><text x="0" y="0" transform="translate(364.5 551.2) rotate(-90)" font-size="10" text-anchor="middle" fill="#444" font-family="Liberation Sans">11</text><rect x="362" y="561" width="1" height="1" fill="#444"/><rect x="360" y="570" width="5" height="1" fill="#555"/><rect x="362" y="580" width="1" height="1" fill="#444"/><text x="0" y="0" transform="translate(364.5 589.0) rotate(-90)" font-size="10" text-anchor="middle" fill="#444" font-family="Liberation Sans">12</text><rect x="362" y="598" width="1" height="1" fill="#444"/><rect x="360" y="608" width="5" height="1" fill="#555"/><rect x="362" y="617" width="1" height="1" fill="#444"/><text x="0" y="0" transform="translate(364.5 626.8) rotate(-90)" font-size="10" text-anchor="middle" fill="#444" font-family="Liberation Sans">13</text><rect x="362" y="636" width="1" height="1" fill="#444"/><rect x="360" y="646" width="5" height="1" fill="#555"/><rect x="362" y="655" width="1" height="1" fill="#444"/><text x="0" y="0" transform="translate(364.5 664.6) rotate(-90)" font-size="10" text-anchor="middle" fill="#444" font-family="Liberation Sans">14</text><rect x="362" y="674" width="1" height="1" fill="#444"/><rect x="360" y="684" width="5" height="1" fill="#555"/><rect x="362" y="693" width="1" height="1" fill="#444"/><text x="0" y="0" transform="translate(364.5 702.4) rotate(-90)" font-size="10" text-anchor="middle" fill="#444" font-family="Liberation Sans">15</text></svg>
<div style="position:absolute;left:1349px;top:221px;width:17px;height:485px;background:#F0F0F0"></div>
<div style="position:absolute;left:1350px;top:187px;width:16px;height:15px;background:#fff;border:1px solid #A0A0A0"></div>
<svg style="position:absolute;left:1354px;top:192px;" width="8" height="5" viewBox="0 0 8 5"><path d="M0 4.5L4 0.5 8 4.5z" fill="#222"/></svg>
<div style="position:absolute;left:1350px;top:204px;width:16px;height:17px;background:#fff;border:1px solid #A0A0A0"></div>
<div style="position:absolute;left:1350px;top:689px;width:16px;height:15px;background:#fff;border:1px solid #A0A0A0"></div>
<svg style="position:absolute;left:1354px;top:694px;" width="8" height="5" viewBox="0 0 8 5"><path d="M0 0.5L4 4.5 8 0.5z" fill="#222"/></svg>
<svg style="position:absolute;left:465px;top:185px" width="792" height="521" viewBox="465 185 792 521">
<!-- flame -->
<path d="M870 422 C838 422 816 405 813 380 C812 365 818 355 822 345 C826 360 828 372 834 378 C832 360 836 345 846 335 C846 352 850 365 856 372 C854 355 860 345 866 337 C868 350 870 362 874 370 C876 355 884 345 892 338 C890 352 890 365 892 374 C898 362 904 352 912 346 C910 360 908 372 910 380 C914 372 920 365 926 360 C928 395 905 422 870 422 Z" fill="#FCEBEB" stroke="#F8DADA" stroke-width="1.2"/>
<path d="M858 415 C850 400 852 385 862 372 M884 415 C892 400 890 385 880 372" fill="none" stroke="#FFF6F6" stroke-width="3"/>
<rect x="824" y="421" width="92" height="18" rx="9" fill="#FDF0F0" stroke="#F8DCDC" stroke-width="1.5"/>
<rect x="830" y="440" width="80" height="19" rx="9" fill="#FDF0F0" stroke="#F8DCDC" stroke-width="1.5"/>
<rect x="842" y="460" width="56" height="10" rx="5" fill="#FDF2F2" stroke="#F9E2E2" stroke-width="1.5"/>
<!-- wings -->
<path d="M702 520 C705 470 760 440 820 448 C850 452 865 470 870 480 C875 470 890 452 920 448 C980 440 1045 470 1050 520" fill="none" stroke="#F2F0E8" stroke-width="4"/>
<path d="M720 525 C730 485 780 465 830 472 C850 476 862 485 870 495 C878 485 890 476 910 472 C960 465 1010 485 1025 525" fill="none" stroke="#F8F2DC" stroke-width="5"/>
<!-- shield -->
<path d="M727 528 H1015 V706 H727 Z" fill="#FDF8E2"/>
<path d="M733 530 V697 H1008 V530" fill="none" stroke="#FBF0C4" stroke-width="9"/><path d="M728.5 530 V701.5 H1012.5 V530 M738 545 H865 V695 H738Z M874 545 H999 V695 H874Z" fill="none" stroke="#F6E6A8" stroke-width="1.2"/>
<path d="M869.5 530 V697" stroke="#FBF0C4" stroke-width="9"/>
<rect x="738" y="545" width="127" height="150" fill="#F1F7FB"/>
<rect x="874" y="545" width="125" height="150" fill="#FBFCFD"/>
<rect x="735" y="701" width="275" height="5" fill="#EAF1F7"/>
<!-- building -->
<path d="M740 630 L760 618 L863 618 V695 H740 Z" fill="#FBF3F2" stroke="#F5DAD6" stroke-width="2"/>
<path d="M755 640v50M770 640v50M790 640v50M805 640v50M820 640v50M835 640v50M850 640v50" stroke="#F6DBD7" stroke-width="3"/>
<path d="M742 688h120" stroke="#F5D5D0" stroke-width="4"/>
<text x="838" y="560" font-size="7" fill="#EBE0DC" font-family="Liberation Sans">SAN</text>
<text x="838" y="572" font-size="7" fill="#EBE0DC" font-family="Liberation Sans">JUAN</text>
<text x="834" y="584" font-size="7" fill="#EBE0DC" font-family="Liberation Sans">DE JUANA</text>
<text x="836" y="596" font-size="7" fill="#EBE0DC" font-family="Liberation Sans">DE ORO</text>
<!-- portrait -->
<path d="M898 585 C895 556 922 549 940 550 C966 551 980 568 978 600 C977 625 970 640 958 645 L940 640 C920 637 904 620 900 600Z" fill="#B9B9B9"/>
<path d="M905 598 C903 575 915 566 932 568 C950 570 956 585 955 605 C954 628 946 640 932 640 C916 639 907 622 905 598Z" fill="#EEEEEE"/>
<path d="M915 592h10M935 592h10M920 620c5 2 10 2 15 0" stroke="#BDBDBD" stroke-width="2" fill="none"/>
<path d="M879 695 C883 668 905 645 932 645 C965 645 993 662 998 695 Z" fill="#D3D9EE"/>
<!-- leaves -->
<ellipse cx="689.0" cy="700.0" rx="12" ry="5" transform="rotate(-40 689.0 700.0)" fill="#E8F1E3"/>
<ellipse cx="711.0" cy="696.0" rx="12" ry="5" transform="rotate(40 711.0 696.0)" fill="#E8F1E3"/>
<ellipse cx="686.5" cy="677.5" rx="12" ry="5" transform="rotate(-40 686.5 677.5)" fill="#E8F1E3"/>
<ellipse cx="708.5" cy="673.5" rx="12" ry="5" transform="rotate(40 708.5 673.5)" fill="#E8F1E3"/>
<ellipse cx="684.0" cy="655.0" rx="12" ry="5" transform="rotate(-40 684.0 655.0)" fill="#E8F1E3"/>
<ellipse cx="706.0" cy="651.0" rx="12" ry="5" transform="rotate(40 706.0 651.0)" fill="#E8F1E3"/>
<ellipse cx="681.5" cy="632.5" rx="12" ry="5" transform="rotate(-40 681.5 632.5)" fill="#E8F1E3"/>
<ellipse cx="703.5" cy="628.5" rx="12" ry="5" transform="rotate(40 703.5 628.5)" fill="#E8F1E3"/>
<ellipse cx="679.0" cy="610.0" rx="12" ry="5" transform="rotate(-40 679.0 610.0)" fill="#E8F1E3"/>
<ellipse cx="701.0" cy="606.0" rx="12" ry="5" transform="rotate(40 701.0 606.0)" fill="#E8F1E3"/>
<ellipse cx="676.5" cy="587.5" rx="12" ry="5" transform="rotate(-40 676.5 587.5)" fill="#E8F1E3"/>
<ellipse cx="698.5" cy="583.5" rx="12" ry="5" transform="rotate(40 698.5 583.5)" fill="#E8F1E3"/>
<ellipse cx="674.0" cy="565.0" rx="12" ry="5" transform="rotate(-40 674.0 565.0)" fill="#E8F1E3"/>
<ellipse cx="696.0" cy="561.0" rx="12" ry="5" transform="rotate(40 696.0 561.0)" fill="#E8F1E3"/>
<path d="M1035 706 C1055 640 1065 590 1068 538 C1085 600 1075 660 1055 706Z" fill="#E9F2E4"/>
<path d="M1055 706 C1080 660 1090 620 1094 590 C1100 640 1085 690 1070 706Z" fill="#E9F2E4"/>
<path d="M1030 706 C1035 670 1040 640 1045 600 C1050 640 1048 680 1045 706Z" fill="#EDF4E9"/>
</svg>
<svg style="position:absolute;left:465px;top:185px" width="300" height="40" viewBox="465 185 300 40">
<rect x="493" y="185" width="108" height="32" fill="#F4F8FA"/>
<path d="M515 185 L520 192 L528 186 L526 185Z" fill="#F2EDE2"/>
<path d="M523 185 A30 30 0 0 0 573 185 Z" fill="#C9D29A"/>
<path d="M526 185 A27 27 0 0 0 570 185 Z" fill="#8C9A7A"/>
<path d="M532 185 C540 193 556 193 564 185Z" fill="#6F7F70"/>
<path d="M540 190 l6 -4 6 6 -5 3z" fill="#B8B0A0"/>
<path d="M509 189 l5 -4 12 9 -6 4z" fill="#F3ECDD"/>
<path d="M513 192 l6 -5 6 6 -5 5z" fill="#6B8575"/>
<path d="M586 189 l-5 -4 -12 9 6 4z" fill="#F3ECDD"/>
<path d="M582 192 l-6 -5 -6 6 5 5z" fill="#6B8575"/>
<path d="M512 194 C525 208 570 208 585 194" fill="none" stroke="#F1E8DA" stroke-width="1.5"/>
<text x="548" y="204" font-size="8.5" font-weight="700" text-anchor="middle" fill="#6A8A80" font-family="Liberation Sans" letter-spacing="0.3">SAN JUAN</text>
<path d="M495 206 L505 204 C530 211 570 211 591 202 L601 204 L596 209 L601 213 C570 219 530 219 497 214 L501 210Z" fill="#FDFBF8" stroke="#F0D8C8" stroke-width="0.8"/>
<text x="548" y="213.5" font-size="3.6" font-weight="700" text-anchor="middle" fill="#707070" font-family="Liberation Sans">POR EL HONOR Y LA GRANDEZA DE LA PATRIA</text>
</svg>
<div style="position:absolute;left:751px;top:184.2px;font: 700 20.5px/20.5px 'Liberation Serif', serif;color:#A2B8D8;white-space:nowrap;transform:scaleX(0.9046);transform-origin:0 0;">Administración 2023 – 2027</div>
<div style="position:absolute;left:664px;top:203px;width:417px;height:3px;background:#CCD9B3"></div>
<div style="position:absolute;left:664px;top:206px;width:417px;height:2px;background:#DADADA"></div>
<div style="position:absolute;left:1145px;top:194.8px;font: 400 10.5px/10.5px 'Liberation Serif', serif;color:#8A8A8A;white-space:nowrap;transform:scaleX(0.8072);transform-origin:0 0;">REPÚBLICA DEL ECUADOR</div>
<div style="position:absolute;left:1193px;top:185px;width:7px;height:2px;background:#F0A0A0"></div>
<div style="position:absolute;left:957.5px;top:256.4px;font: 400 13.2px/13.2px 'Liberation Sans', sans-serif;color:#000000;white-space:nowrap;transform:scaleX(0.9836);transform-origin:0 0;">San Juan, 02 de marzo del 2026</div>
<div style="position:absolute;left:808px;top:318.8px;font: 700 17.5px/17.5px 'Liberation Sans', sans-serif;color:#000000;white-space:nowrap;transform:scaleX(1.0668);transform-origin:0 0;">INVITACION</div>
<div style="position:absolute;left:578px;top:355.9px;font: 400 13.2px/13.2px 'Liberation Sans', sans-serif;color:#000000;white-space:nowrap;transform:scaleX(1.0685);transform-origin:0 0;">Abg.</div>
<div style="position:absolute;left:578px;top:374.9px;font: 400 13.2px/13.2px 'Liberation Sans', sans-serif;color:#000000;white-space:nowrap;transform:scaleX(1.0897);transform-origin:0 0;">Wendy Farah</div>
<div style="position:absolute;left:578px;top:393.9px;font: 700 13.2px/13.2px 'Liberation Sans', sans-serif;color:#000000;white-space:nowrap;">COMISARIA NACIONAL DE POLICIA DEL CANTON PUEBLOVIEJO</div>
<div style="position:absolute;left:578px;top:415.4px;font: 400 13.2px/13.2px 'Liberation Sans', sans-serif;color:#000000;white-space:nowrap;transform:scaleX(1.0026);transform-origin:0 0;">Presente.-</div>
<div style="position:absolute;left:578px;top:427px;width:61px;height:1px;background:#4A6FC7"></div>
<div style="position:absolute;left:578px;top:429px;width:61px;height:1px;background:#4A6FC7"></div>
<div style="position:absolute;left:578px;top:464.4px;width:567px;font:13.2px/13.2px 'Liberation Sans', sans-serif;color:#000;text-align:justify;text-align-last:justify;white-space:nowrap">En mi calidad de presidente del Comité de Operaciones de Emergencia de la Parroquia San</div>
<div style="position:absolute;left:578px;top:484.4px;width:567px;font:13.2px/13.2px 'Liberation Sans', sans-serif;color:#000;text-align:justify;text-align-last:justify;white-space:nowrap">Juan, Amparado en el Artículo 70 del Código Orgánico de Organización Territorial, Autonomía y</div>
<div style="position:absolute;left:578px;top:503.4px;width:567px;font:13.2px/13.2px 'Liberation Sans', sans-serif;color:#000;text-align:justify;text-align-last:justify;white-space:nowrap">Descentralización y en el Decreto Ejecutivo N. 394 de fecha 18 de septiembre del 2024, tengo a</div>
<div style="position:absolute;left:578px;top:522.4px;width:567px;font:13.2px/13.2px 'Liberation Sans', sans-serif;color:#000;text-align:justify;text-align-last:justify;white-space:nowrap">bien hacerle una cordial invitación a una reunión de trabajo con la finalidad de <b>Informar sobre</b></div>
<div style="position:absolute;left:578px;top:541.4px;font: 700 13.2px/13.2px 'Liberation Sans', sans-serif;color:#000000;white-space:nowrap;transform:scaleX(0.9634);transform-origin:0 0;">las actividades realizadas por la etapa invernal.</div>
<div style="position:absolute;left:578px;top:571.4px;font: 700 13.2px/13.2px 'Liberation Sans', sans-serif;color:#000000;white-space:nowrap;transform:scaleX(0.9055);transform-origin:0 0;">Fecha:</div>
<div style="position:absolute;left:621px;top:571.4px;font: 400 13.2px/13.2px 'Liberation Sans', sans-serif;color:#000000;white-space:nowrap;transform:scaleX(0.9904);transform-origin:0 0;">Jueves, 05 de marzo del 2026</div>
<div style="position:absolute;left:621px;top:583px;width:40px;height:1px;background:#4A6FC7"></div>
<div style="position:absolute;left:621px;top:585px;width:40px;height:1px;background:#4A6FC7"></div>
<div style="position:absolute;left:578px;top:601.4px;font: 700 13.2px/13.2px 'Liberation Sans', sans-serif;color:#000000;white-space:nowrap;transform:scaleX(0.8847);transform-origin:0 0;">Lugar:</div>
<div style="position:absolute;left:619.5px;top:601.4px;font: 400 13.2px/13.2px 'Liberation Sans', sans-serif;color:#000000;white-space:nowrap;transform:scaleX(0.9947);transform-origin:0 0;">Auditorio del GAD Parroquial San Juan</div>
<div style="position:absolute;left:578px;top:631.4px;font: 700 13.2px/13.2px 'Liberation Sans', sans-serif;color:#000000;white-space:nowrap;transform:scaleX(0.9437);transform-origin:0 0;">Hora:</div>
<div style="position:absolute;left:615.7px;top:631.4px;font: 400 13.2px/13.2px 'Liberation Sans', sans-serif;color:#000000;white-space:nowrap;transform:scaleX(0.9961);transform-origin:0 0;">10h00 (diez de la mañana)</div>
<div style="position:absolute;left:578px;top:661.4px;font: 400 13.2px/13.2px 'Liberation Sans', sans-serif;color:#000000;white-space:nowrap;">Esperando contar con su presencia, me suscribo de usted,</div>
<div style="position:absolute;left:8.5px;top:711.5px;font: 400 12.5px/12.5px 'Liberation Sans', sans-serif;color:#444444;white-space:nowrap;transform:scaleX(0.8798);transform-origin:0 0;">Página 1 de 28</div>
<div style="position:absolute;left:101.5px;top:711.5px;font: 400 12.5px/12.5px 'Liberation Sans', sans-serif;color:#444444;white-space:nowrap;transform:scaleX(0.8961);transform-origin:0 0;">3726 palabras</div>
<svg style="position:absolute;left:191px;top:710px;" width="16" height="15" viewBox="0 0 16 15"><path d="M0.6 0.6h9l0 0v13.8h-9z" fill="none" stroke="#605E5C" stroke-width="1.1"/><path d="M4 4h3M4 7h3" stroke="#605E5C"/><path d="M8 8l6 6M14 8l-6 6" stroke="#605E5C" stroke-width="1.2"/></svg>
<div style="position:absolute;left:224px;top:711.5px;font: 400 12.5px/12.5px 'Liberation Sans', sans-serif;color:#444444;white-space:nowrap;transform:scaleX(0.8886);transform-origin:0 0;">Español (Ecuador)</div>
<svg style="position:absolute;left:334px;top:710px;" width="16" height="14" viewBox="0 0 16 14"><rect x="0.6" y="0.6" width="13" height="10" fill="none" stroke="#605E5C" stroke-width="1.1"/><path d="M0.6 3h13M3 6h4M3 8h3" stroke="#605E5C" stroke-width="1"/><circle cx="11.5" cy="9.5" r="3.5" fill="#F3F2F1" stroke="#605E5C" stroke-width="1.1"/><circle cx="11.5" cy="9.5" r="1.2" fill="#605E5C"/></svg>
<svg style="position:absolute;left:366px;top:709px;" width="16" height="16" viewBox="0 0 16 16"><circle cx="6" cy="2.5" r="1.8" fill="none" stroke="#605E5C" stroke-width="1.1"/><path d="M1 5.5h10M6 5.5v5l-3 4.5M6 10.5l3 4.5" fill="none" stroke="#605E5C" stroke-width="1.1"/><path d="M10 10l5 5M15 10l-5 5" stroke="#605E5C" stroke-width="1.1"/></svg>
<div style="position:absolute;left:384px;top:712.0px;font: 400 12.5px/12.5px 'Liberation Sans', sans-serif;color:#444444;white-space:nowrap;transform:scaleX(0.9315);transform-origin:0 0;">Accesibilidad: No disponible</div>
<svg style="position:absolute;left:961px;top:709px;" width="15" height="16" viewBox="0 0 15 16"><path d="M0.6 4V0.6H4M11 0.6h3.4V4M14.4 12v3.4H11M4 15.4H0.6V12" fill="none" stroke="#605E5C" stroke-width="1.1"/><path d="M4 3.5h5l2.5 2.5v6.5H4z" fill="none" stroke="#605E5C" stroke-width="1.1"/></svg>
<div style="position:absolute;left:979.5px;top:712.0px;font: 400 12.5px/12.5px 'Liberation Sans', sans-serif;color:#444444;white-space:nowrap;transform:scaleX(0.9118);transform-origin:0 0;">Concentración</div>
<svg style="position:absolute;left:1079px;top:711px;" width="14" height="12" viewBox="0 0 14 12"><path d="M0.6 0.6h5l1.4 1.4 1.4-1.4h5v10.8h-5L7 12.8l-1.4-1.4h-5z M7 2v10" fill="none" stroke="#605E5C" stroke-width="1.1"/><path d="M2.5 4h2.5M2.5 6.5h2.5M9 4h2.5M9 6.5h2.5" stroke="#605E5C"/></svg>
<div style="position:absolute;left:1106px;top:707px;width:40px;height:21px;background:#D2D0CE"></div>
<svg style="position:absolute;left:1119px;top:711px;" width="12" height="14" viewBox="0 0 12 14"><rect x="0.6" y="0.6" width="10.8" height="12.8" fill="none" stroke="#323130" stroke-width="1.1"/><path d="M3 3.5h6M3 6h6M3 8.5h6M3 11h6" stroke="#323130" stroke-width="1"/></svg>
<svg style="position:absolute;left:1158px;top:710px;" width="16" height="15" viewBox="0 0 16 15"><rect x="0.6" y="0.6" width="12" height="12" fill="none" stroke="#605E5C" stroke-width="1.1"/><path d="M0.6 3h12M3 5.5h4M3 8h3" stroke="#605E5C"/><circle cx="11.5" cy="10.5" r="3.8" fill="#F3F2F1" stroke="#605E5C" stroke-width="1.1"/><path d="M7.7 10.5h7.6M11.5 6.7c-2 2.5-2 5 0 7.6 2-2.6 2-5.1 0-7.6" fill="none" stroke="#605E5C" stroke-width="0.9"/></svg>
<div style="position:absolute;left:1191px;top:717px;width:8px;height:1px;background:#605E5C"></div>
<div style="position:absolute;left:1205px;top:717px;width:100px;height:1px;background:#8A8886"></div>
<div style="position:absolute;left:1253px;top:710px;width:5px;height:14px;background:#444"></div>
<div style="position:absolute;left:1309px;top:717px;width:8px;height:1px;background:#605E5C"></div>
<div style="position:absolute;left:1312.5px;top:713.5px;width:1.0px;height:8.0px;background:#605E5C"></div>
<div style="position:absolute;left:1331.5px;top:712.3px;font: 400 12px/12px 'Liberation Sans', sans-serif;color:#444444;white-space:nowrap;transform:scaleX(0.8305);transform-origin:0 0;">100%</div>
<svg style="position:absolute;left:16px;top:740px;" width="17" height="17" viewBox="0 0 17 17"><path d="M0 2.4L7 1.4V8H0z M8 1.2L17 0V8H8z M0 9h7v6.6L0 14.6z M8 9h9v8l-9-1.2z" fill="#fff"/></svg>
<svg style="position:absolute;left:61px;top:737px;" width="23" height="23" viewBox="0 0 23 23"><circle cx="13.5" cy="9" r="7" fill="none" stroke="#fff" stroke-width="2"/><path d="M8.5 14L2 20.5" stroke="#fff" stroke-width="2.2" stroke-linecap="round"/></svg>
<svg style="position:absolute;left:111px;top:736px;" width="24" height="24" viewBox="0 0 24 24"><defs><linearGradient id="cp1" x1="0" y1="0" x2="0.3" y2="1"><stop offset="0" stop-color="#2ED3B7"/><stop offset="0.5" stop-color="#3F7BF2"/><stop offset="1" stop-color="#D946C4"/></linearGradient><linearGradient id="cp2" x1="0" y1="0" x2="0.3" y2="1"><stop offset="0" stop-color="#9B6BF5"/><stop offset="0.5" stop-color="#F0589B"/><stop offset="1" stop-color="#F7A93B"/></linearGradient></defs><path d="M6 4c.5-2 2-3 4-3h5c-2 0-3 1-3.5 3L8 19c-.5 2-2 3-4 3H3c-2 0-3-1.5-2.5-3.5z" fill="url(#cp1)"/><path d="M16 2h4c2 0 3.5 1.5 3 3.5L19 20c-.5 2-2 3-4 3h-5c2 0 3-1 3.5-3L17 6c.3-1.5-.5-4-1-4z" fill="url(#cp2)"/><path d="M9 4h6l-5 16H4z" fill="#5E8EF7" opacity="0.6"/></svg>
<svg style="position:absolute;left:160px;top:735px;" width="25" height="25" viewBox="0 0 25 25"><defs><linearGradient id="ie" x1="0" y1="0" x2="0" y2="1"><stop offset="0" stop-color="#7FD8F8"/><stop offset="1" stop-color="#1E9BE0"/></linearGradient></defs><path d="M21.5 14.5H7.5c.3 3.2 2.8 5 5.8 5 2.3 0 4-1 5.3-2.5h3c-1.6 3.5-4.8 5.5-8.5 5.5C8 22.5 4 18.5 4 13.5S8 4.5 13 4.5s8.5 4 8.5 8.8zM7.8 11.5h10.5c-.5-2.6-2.6-4.3-5.2-4.3s-4.8 1.7-5.3 4.3z" fill="url(#ie)" stroke="#3DB5EE" stroke-width="0.8"/><path d="M2.5 21.5C0 19 5 11 12 6s12-6 12.5-4c.4 1.6-2 4-4 5.5" fill="none" stroke="#F3C53A" stroke-width="1.8"/></svg>
<svg style="position:absolute;left:209px;top:736px;" width="24" height="24" viewBox="0 0 24 24"><defs><linearGradient id="ed1" x1="0" y1="0" x2="1" y2="0.3"><stop offset="0" stop-color="#2FA8E0"/><stop offset="1" stop-color="#4CD56A"/></linearGradient></defs><circle cx="12" cy="12" r="11.5" fill="#1565C0"/><path d="M0.5 12A11.5 11.5 0 0 1 23.5 12c0 3-2.5 4.5-5 4.5-2 0-3.5-1-3.5-3 0-2-2-4-5-4S1.5 12 .5 12z" fill="url(#ed1)"/><path d="M0.5 12c0-2 3-4 7-4 3 0 5.5 1.8 5.5 4.5 0 1.2-.6 2-1.5 2.5-1 .5-2.5.2-3-.8" fill="#1E88E5"/><circle cx="11" cy="14.5" r="2.6" fill="#0D3C7A"/></svg>
<svg style="position:absolute;left:257px;top:736px;" width="25" height="24" viewBox="0 0 25 24"><defs><linearGradient id="ol" x1="0" y1="0" x2="1" y2="1"><stop offset="0" stop-color="#5FB8F5"/><stop offset="1" stop-color="#1A6FD8"/></linearGradient></defs><path d="M3 9L13 1.5 24 9v12.5c0 1-.8 1.5-1.5 1.5H4.5C3.5 23 3 22.5 3 21.5z" fill="url(#ol)"/><path d="M6 12L19 4l5 5-11 7z" fill="#3F51D8" opacity="0.75"/><path d="M3 13l10 7 11-7v8.5c0 1-.8 1.5-1.5 1.5H4.5C3.5 23 3 22.5 3 21.5z" fill="#42C0F7" opacity="0.8"/><rect x="0.5" y="11" width="10.5" height="10.5" rx="1.5" fill="#0F5BC4"/><circle cx="5.75" cy="16.25" r="2.8" fill="none" stroke="#fff" stroke-width="1.7"/></svg>
<svg style="position:absolute;left:306px;top:736px;" width="27" height="26" viewBox="0 0 27 26"><circle cx="12" cy="12" r="11" fill="#E34133"/><path d="M12 12L1.5 9A11 11 0 0 0 10 23z" fill="#31A852"/><path d="M12 12l11 -1A11 11 0 0 1 10 23z" fill="#F9C412"/><circle cx="12" cy="12" r="4.5" fill="#fff"/><circle cx="12" cy="12" r="3.5" fill="#4A8AF4"/><circle cx="19.5" cy="18.5" r="6" fill="#3C78D8" stroke="#fff" stroke-width="1.2"/><circle cx="19.5" cy="16.5" r="1.8" fill="none" stroke="#fff" stroke-width="1"/><path d="M16.5 21.5c1-2 5-2 6 0" fill="none" stroke="#fff" stroke-width="1"/></svg>
<svg style="position:absolute;left:355px;top:736px;" width="24" height="24" viewBox="0 0 24 24"><defs><linearGradient id="ff" x1="0" y1="0" x2="0.6" y2="1"><stop offset="0" stop-color="#FFBD2E"/><stop offset="0.5" stop-color="#FF5A36"/><stop offset="1" stop-color="#E02B74"/></linearGradient></defs><circle cx="12" cy="13" r="10.5" fill="url(#ff)"/><circle cx="12.5" cy="13" r="5.5" fill="#7B3BD6"/><path d="M3 8c2-6 10-8 14-5-4-1-7 1-8 4" fill="#FFD43C"/></svg>
<svg style="position:absolute;left:404px;top:736px;" width="24" height="24" viewBox="0 0 24 24"><rect x="0.5" y="0.5" width="23" height="23" rx="3" fill="#B30B00"/><path d="M5 18c3-5 5-10 4.5-12.5S8 6 10 10s6 6 8 5.5-4-2-12 2.5" fill="none" stroke="#fff" stroke-width="1.6"/></svg>
<svg style="position:absolute;left:453px;top:737px;" width="25" height="22" viewBox="0 0 25 22"><path d="M1 2h8l2 2h13v17H1z" fill="#E8B53A"/><path d="M1 6h23v15H1z" fill="#F9D66B"/><path d="M7 12h11v9h-3v-5h-5v5H7z" fill="#3A8AD8"/></svg>
<svg style="position:absolute;left:502px;top:736px;" width="24" height="24" viewBox="0 0 24 24"><circle cx="12" cy="12" r="11.5" fill="#0B5CFF"/><text x="12" y="16" font-size="11" font-weight="700" text-anchor="middle" fill="#fff" font-family="Liberation Sans">zm</text></svg>
<div style="position:absolute;left:540px;top:728px;width:44px;height:40px;background:rgba(255,255,255,0.16)"></div>
<div style="position:absolute;left:584px;top:728px;width:4px;height:40px;background:rgba(255,255,255,0.08)"></div>
<svg style="position:absolute;left:551px;top:737px;" width="26" height="22" viewBox="0 0 26 22"><path d="M7 0h18v22H7z" fill="#185ABD"/><path d="M7 0h18v5.5H7z" fill="#41A5EE"/><path d="M7 5.5h18V11H7z" fill="#2B7CD3"/><path d="M7 16.5h18V22H7z" fill="#103F91"/><rect x="0" y="5" width="14" height="13" rx="1" fill="#185ABD"/><text x="7" y="15.5" font-size="10" font-weight="700" text-anchor="middle" fill="#fff" font-family="Liberation Sans">W</text></svg>
<svg style="position:absolute;left:601px;top:737px;" width="25" height="22" viewBox="0 0 25 22"><path d="M7 0h18v22H7z" fill="#107C41"/><path d="M7 0h18v5.5H7z" fill="#33C481"/><path d="M16 5.5h9V11h-9z" fill="#21A366"/><path d="M7 16.5h18V22H7z" fill="#185C37"/><rect x="0" y="5" width="13" height="13" rx="1" fill="#107C41"/><text x="6.5" y="15.5" font-size="10" font-weight="700" text-anchor="middle" fill="#fff" font-family="Liberation Sans">X</text></svg>
<div style="position:absolute;left:299px;top:766px;width:40px;height:2px;background:#8CC4F5"></div>
<div style="position:absolute;left:446px;top:766px;width:31px;height:2px;background:#8CC4F5"></div>
<div style="position:absolute;left:540px;top:766px;width:44px;height:2px;background:#8CC4F5"></div>
<div style="position:absolute;left:593px;top:766px;width:31px;height:2px;background:#8CC4F5"></div>
<div style="position:absolute;left:477px;top:766px;width:9px;height:2px;background:#5F7A92"></div>
<div style="position:absolute;left:584px;top:766px;width:4px;height:2px;background:#5F7A92"></div>
<div style="position:absolute;left:624px;top:766px;width:9px;height:2px;background:#5F7A92"></div>
<svg style="position:absolute;left:1147px;top:744px;" width="13" height="8" viewBox="0 0 13 8"><path d="M0.7 7.3L6.5 1.3l5.8 6" fill="none" stroke="#fff" stroke-width="1.3"/></svg>
<svg style="position:absolute;left:1171px;top:742px;" width="14" height="14" viewBox="0 0 14 14"><path d="M1 13A12 12 0 0 1 13 1M4 13A9 9 0 0 1 13 4M7 13A6 6 0 0 1 13 7" fill="none" stroke="#fff" stroke-width="1.2"/><circle cx="12" cy="12" r="1.6" fill="#fff"/></svg>
<svg style="position:absolute;left:1195px;top:740px;" width="13" height="17" viewBox="0 0 13 17"><path d="M2 3c2-2 7-2 9 0M2 14c2 2 7 2 9 0" fill="none" stroke="#fff" stroke-width="1.1"/><rect x="1" y="5" width="7" height="7" rx="1.5" fill="none" stroke="#fff" stroke-width="1.2"/><path d="M8 7.5l3.5-2v6l-3.5-2" fill="none" stroke="#fff" stroke-width="1.2"/></svg>
<div style="position:absolute;left:1221px;top:741.5px;font: 400 12px/12px 'Liberation Sans', sans-serif;color:#fff;white-space:nowrap;transform:scaleX(0.7495);transform-origin:0 0;">ESP</div>
<div style="position:absolute;left:1267.5px;top:732.5px;font: 400 12px/12px 'Liberation Sans', sans-serif;color:#fff;white-space:nowrap;transform:scaleX(0.8824);transform-origin:0 0;">15:07</div>
<div style="position:absolute;left:1258px;top:750.5px;font: 400 12px/12px 'Liberation Sans', sans-serif;color:#fff;white-space:nowrap;transform:scaleX(0.9739);transform-origin:0 0;">2/3/2026</div>
<svg style="position:absolute;left:1324px;top:739px;" width="26" height="26" viewBox="0 0 26 26"><path d="M1 1h18v13h-9l-5 5v-5H1z" fill="#fff"/><path d="M4 4.5h12M4 7.5h12M4 10.5h12" stroke="#1A2A46" stroke-width="1.1"/><circle cx="17.5" cy="17" r="7" fill="#303030" stroke="#8A8A8A" stroke-width="1"/><text x="17.5" y="21" font-size="10" text-anchor="middle" fill="#fff" font-family="Liberation Sans">3</text></svg>
<div style="position:absolute;left:1361px;top:728px;width:1px;height:40px;background:#5A6A80"></div>
</body></html>
